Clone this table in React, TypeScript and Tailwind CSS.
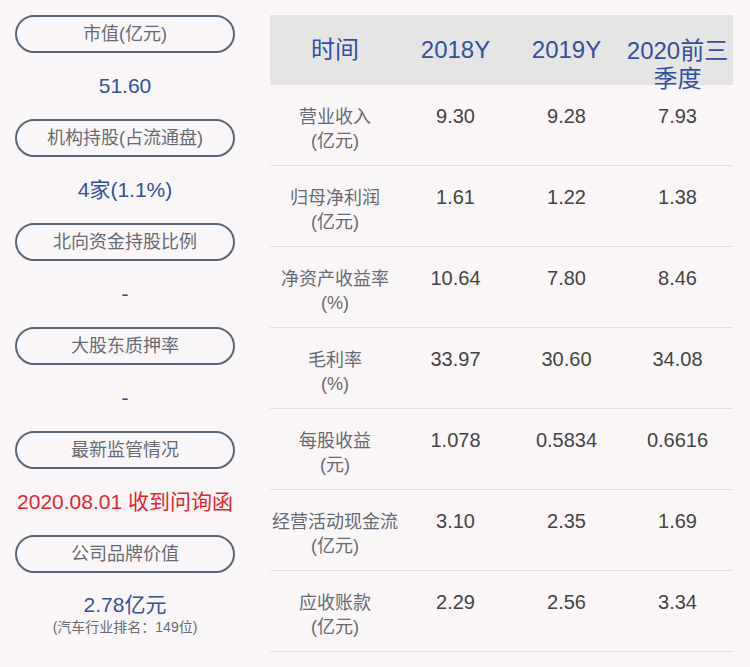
import React from 'react';

const font = { fontFamily: '"Liberation Sans", "Noto Sans CJK SC", sans-serif' };

const leftItems: { label: string; value: string; red?: boolean; note?: string }[] = [
  { label: '市值(亿元)', value: '51.60' },
  { label: '机构持股(占流通盘)', value: '4家(1.1%)' },
  { label: '北向资金持股比例', value: '-' },
  { label: '大股东质押率', value: '-' },
  { label: '最新监管情况', value: '2020.08.01 收到问询函', red: true },
  { label: '公司品牌价值', value: '2.78亿元', note: '(汽车行业排名：149位)' },
];

const rows = [
  { name: '营业收入', unit: '(亿元)', v: ['9.30', '9.28', '7.93'] },
  { name: '归母净利润', unit: '(亿元)', v: ['1.61', '1.22', '1.38'] },
  { name: '净资产收益率', unit: '(%)', v: ['10.64', '7.80', '8.46'] },
  { name: '毛利率', unit: '(%)', v: ['33.97', '30.60', '34.08'] },
  { name: '每股收益', unit: '(元)', v: ['1.078', '0.5834', '0.6616'] },
  { name: '经营活动现金流', unit: '(亿元)', v: ['3.10', '2.35', '1.69'] },
  { name: '应收账款', unit: '(亿元)', v: ['2.29', '2.56', '3.34'] },
];

const App: React.FC = () => {
  return (
    <div className="w-[750px] h-[667px] bg-[#faf6f7] flex overflow-hidden" style={font}>
      <div className="w-[220px] ml-[15px] pt-[15px] flex flex-col">
        {leftItems.map((it, i) => (
          <div key={i} className="flex flex-col">
            <div className="h-[38px] rounded-full border-2 border-[#5c6677] flex items-center justify-center text-[18px] text-[#666b73]">
              {it.label}
            </div>
            {it.note ? (
              <div className="flex flex-col items-center pt-[20px]">
                <div className="text-[21px] leading-[24px] text-[#32509e]">{it.value}</div>
                <div className="text-[14px] leading-[20px] text-[#666b73]">{it.note}</div>
              </div>
            ) : (
              <div className={`h-[66px] flex items-center justify-center text-[21px] ${it.red ? 'text-[#e3262e]' : 'text-[#32509e]'}`}>
                {it.value}
              </div>
            )}
          </div>
        ))}
      </div>

      <div className="ml-[35px] mt-[15px] w-[463px] flex flex-col">
        <div className="h-[70px] bg-[#e5e5e5] flex text-[24px] text-[#32509e]">
          <div className="w-[130px] flex items-center justify-center">时间</div>
          <div className="w-[111px] flex items-center justify-center">2018Y</div>
          <div className="w-[111px] flex items-center justify-center">2019Y</div>
          <div className="w-[111px] pt-[22px] text-center leading-[28px] h-[70px]">2020前三季度</div>
        </div>
        {rows.map((r, i) => (
          <div key={i} className="h-[81px] border-b border-[#e2e0e1] flex pt-[20px]">
            <div className="w-[130px] flex flex-col items-center text-[18px] leading-[24px] text-[#666b73]">
              <span>{r.name}</span>
              <span>{r.unit}</span>
            </div>
            {r.v.map((v, j) => (
              <div key={j} className="w-[111px] text-center text-[20px] leading-[22px] text-[#444]">
                {v}
              </div>
            ))}
          </div>
        ))}
      </div>
    </div>
  );
};

export default App;
